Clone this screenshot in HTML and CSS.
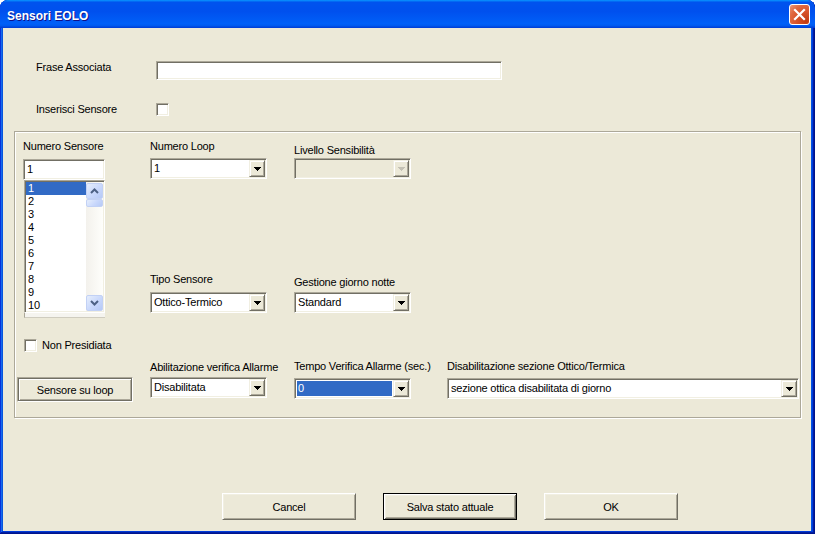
FILE: index.html
```html
<!DOCTYPE html>
<html lang="it">
<head>
<meta charset="utf-8">
<title>Sensori EOLO</title>
<link rel="stylesheet" href="styles.css">
</head>
<body>
<div class="window">
  <div class="titlebar">
    <span class="title">Sensori EOLO</span>
    <div class="close">
      <svg width="19" height="19" viewBox="0 0 19 19"><path d="M5 5 L14 14 M14 5 L5 14" stroke="#fff" stroke-width="2.2" stroke-linecap="square"/></svg>
    </div>
  </div>
  <div class="client">
    <div class="row row-frase">
      <span class="lbl wide">Frase Associata</span>
      <div class="sunken frase"></div>
    </div>
    <div class="row row-ins">
      <span class="lbl wide">Inserisci Sensore</span>
      <span class="sunken check"></span>
    </div>

    <div class="group">
      <div class="top">
        <div class="c1">
          <div class="lbl">Numero Sensore</div>
          <div class="sunken tf">1</div>
          <div class="sunken listbox">
            <div class="items">
              <div class="item sel">1</div>
              <div class="item">2</div>
              <div class="item">3</div>
              <div class="item">4</div>
              <div class="item">5</div>
              <div class="item">6</div>
              <div class="item">7</div>
              <div class="item">8</div>
              <div class="item">9</div>
              <div class="item">10</div>
            </div>
            <div class="sb">
              <div class="sbb"><svg width="9" height="6" viewBox="0 0 9 6"><path d="M1 5 L4.5 1.5 L8 5" fill="none" stroke="#4d6185" stroke-width="2"/></svg></div>
              <div class="sbb thumb"></div>
              <div class="sbb down"><svg width="9" height="6" viewBox="0 0 9 6"><path d="M1 1 L4.5 4.5 L8 1" fill="none" stroke="#4d6185" stroke-width="2"/></svg></div>
            </div>
          </div>
          <div class="strip"></div>
        </div>
        <div class="c2">
          <div class="lbl">Numero Loop</div>
          <div class="sunken combo m5"><span class="val">1</span><span class="raised ddb"><svg class="tri" width="7" height="4" viewBox="0 0 7 4" shape-rendering="crispEdges"><path d="M0 0h7v1h-7z M1 1h5v1h-5z M2 2h3v1h-3z M3 3h1v1h-1z" fill="#000"/></svg></span></div>
          <div class="lbl m94">Tipo Sensore</div>
          <div class="sunken combo m6"><span class="val">Ottico-Termico</span><span class="raised ddb"><svg class="tri" width="7" height="4" viewBox="0 0 7 4" shape-rendering="crispEdges"><path d="M0 0h7v1h-7z M1 1h5v1h-5z M2 2h3v1h-3z M3 3h1v1h-1z" fill="#000"/></svg></span></div>
        </div>
        <div class="c3">
          <div class="lbl m4">Livello Sensibilità</div>
          <div class="sunken combo disabled m1"><span class="val"></span><span class="raised ddb"><svg class="tri" width="7" height="4" viewBox="0 0 7 4" shape-rendering="crispEdges"><path d="M0 0h7v1h-7z M1 1h5v1h-5z M2 2h3v1h-3z M3 3h1v1h-1z" fill="#c4c1b4"/></svg></span></div>
          <div class="lbl m97">Gestione giorno notte</div>
          <div class="sunken combo m3"><span class="val">Standard</span><span class="raised ddb"><svg class="tri" width="7" height="4" viewBox="0 0 7 4" shape-rendering="crispEdges"><path d="M0 0h7v1h-7z M1 1h5v1h-5z M2 2h3v1h-3z M3 3h1v1h-1z" fill="#000"/></svg></span></div>
        </div>
      </div>

      <div class="row np-row">
        <span class="sunken check"></span>
        <span class="lbl np-lbl">Non Presidiata</span>
      </div>

      <div class="row bottom">
        <div class="b1">
          <div class="loopframe"><div class="loopbtn">Sensore su loop</div></div>
        </div>
        <div class="c2">
          <div class="lbl m1">Abilitazione verifica Allarme</div>
          <div class="sunken combo m3"><span class="val">Disabilitata</span><span class="raised ddb"><svg class="tri" width="7" height="4" viewBox="0 0 7 4" shape-rendering="crispEdges"><path d="M0 0h7v1h-7z M1 1h5v1h-5z M2 2h3v1h-3z M3 3h1v1h-1z" fill="#000"/></svg></span></div>
        </div>
        <div class="c3">
          <div class="lbl">Tempo Verifica Allarme (sec.)</div>
          <div class="sunken combo m5"><span class="val sel">0</span><span class="raised ddb"><svg class="tri" width="7" height="4" viewBox="0 0 7 4" shape-rendering="crispEdges"><path d="M0 0h7v1h-7z M1 1h5v1h-5z M2 2h3v1h-3z M3 3h1v1h-1z" fill="#000"/></svg></span></div>
        </div>
        <div class="c4">
          <div class="lbl">Disabilitazione sezione Ottico/Termica</div>
          <div class="sunken combo wide-combo m5"><span class="val">sezione ottica disabilitata di giorno</span><span class="raised ddb"><svg class="tri" width="7" height="4" viewBox="0 0 7 4" shape-rendering="crispEdges"><path d="M0 0h7v1h-7z M1 1h5v1h-5z M2 2h3v1h-3z M3 3h1v1h-1z" fill="#000"/></svg></span></div>
        </div>
      </div>
    </div>

    <div class="buttons">
      <div class="btn raised2">Cancel</div>
      <div class="btn default">Salva stato attuale</div>
      <div class="btn raised2">OK</div>
    </div>
  </div>
</div>
</body>
</html>
```

FILE: styles.css
```css
* { box-sizing: border-box; }
html, body { margin: 0; padding: 0; }
body {
  width: 815px;
  height: 534px;
  overflow: hidden;
  background: #ffffff;
  font-family: "Liberation Sans", Arial, sans-serif;
  font-size: 11px;
  color: #000;
}

.window {
  width: 815px;
  height: 534px;
  display: flex;
  flex-direction: column;
  background: #0054e3;
  border-radius: 8px 8px 0 0;
  overflow: hidden;
  box-shadow: inset -1px -1px #00138c, inset 1px 1px #0831d9,
              inset -2px -2px #001ea0, inset 2px 2px #166aee,
              inset -3px -3px #003bda, inset 3px 3px #0855dd;
}

.titlebar {
  flex: none;
  height: 28px;
  display: flex;
  align-items: flex-start;
  padding: 0 5px 0 7px;
  border-radius: 7px 7px 0 0;
  background: linear-gradient(180deg, #0997ff 0, #0053ee 8%, #0050ee 40%, #0060f8 85%, #0058ee 93%, #0047dd 96%, #003dd7 100%);
}
.title {
  margin-top: 9px;
  color: #fff;
  font-weight: bold;
  font-size: 12px;
  line-height: 14px;
  text-shadow: 1px 1px #0f1089;
}
.close {
  margin-left: auto;
  margin-top: 4px;
  width: 21px;
  height: 21px;
  border: 1px solid #fff;
  border-radius: 3px;
  background: radial-gradient(circle at 85% 85%, #c13b12 0, #d9552c 45%, #e0683f 70%, #ec9a7c 100%);
  display: flex;
  align-items: center;
  justify-content: center;
}

.client {
  flex: 1;
  margin: 0 4px 3px 3px;
  background: #ece9d8;
  padding-top: 33px;
}

.lbl {
  line-height: 13px;
  white-space: nowrap;
  letter-spacing: -0.2px;
}
.row { display: flex; align-items: flex-start; }
.row-frase { margin-left: 33px; }
.row-ins { margin-left: 33px; margin-top: 23px; }
.wide { width: 120px; }

.sunken {
  background: #fff;
  border: 1px solid;
  border-color: #aca899 #fff #fff #aca899;
  box-shadow: inset 1px 1px #716f64, inset -1px -1px #f1efe2;
}
.raised {
  background: #ece9d8;
  border: 1px solid;
  border-color: #f1efe2 #716f64 #716f64 #f1efe2;
  box-shadow: inset 1px 1px #fff, inset -1px -1px #aca899;
}

.frase { width: 346px; height: 19px; }
.check { width: 13px; height: 13px; flex: none; display: block; }

.group {
  margin: 15px 0 0 11px;
  width: 787px;
  height: 287px;
  border: 1px solid #aca899;
  box-shadow: inset 1px 1px #fff, 1px 1px #fff;
  padding: 8px 0 0 2px;
}
.top { display: flex; align-items: flex-start; }
.c1 { width: 133px; padding-left: 6px; }
.b1 { width: 133px; }
.c2 { width: 144px; }
.c3 { width: 153px; }
.c4 { width: 352px; }

.m1 { margin-top: 1px; }
.m3 { margin-top: 3px; }
.m4 { margin-top: 4px; }
.m5 { margin-top: 5px; }
.m6 { margin-top: 6px; }
.m94 { margin-top: 94px; }
.m97 { margin-top: 97px; }

.tf {
  width: 82px;
  height: 21px;
  margin-top: 6px;
  padding: 1px 0 1px 3px;
  line-height: 17px;
}
.listbox {
  margin-left: 1px;
  width: 81px;
  height: 133px;
  display: flex;
  padding: 1px;
}
.items { flex: 1; overflow: hidden; }
.item { height: 13px; line-height: 13px; padding-left: 2px; }
.item.sel { background: #316ac5; color: #fff; }
.sb {
  width: 17px;
  display: flex;
  flex-direction: column;
  background: linear-gradient(90deg, #f3f1ec, #fefefb);
}
.sbb {
  height: 16px;
  margin-top: 1px;
  border: 1px solid #c2d1f5;
  border-radius: 2px;
  background: linear-gradient(135deg, #e6eefc 0%, #c9d8fc 55%, #b6c9f6 100%);
  display: flex;
  align-items: center;
  justify-content: center;
}
.sbb.thumb { height: 8px; margin-top: 0; }
.sbb.down { margin-top: auto; margin-bottom: 0; }
.strip {
  margin-left: 1px;
  width: 81px;
  height: 5px;
  background: #f5f4ef;
  border-left: 1px solid #aca899;
  border-bottom: 1px solid #cfccbf;
}

.combo {
  width: 117px;
  height: 21px;
  padding: 1px;
  display: flex;
}
.combo.disabled { background: #ece9d8; }
.wide-combo { width: 352px; }
.val {
  flex: 1;
  line-height: 17px;
  padding-left: 2px;
  white-space: nowrap;
  overflow: hidden;
  letter-spacing: -0.2px;
}
.val.sel {
  background: #316ac5;
  color: #fff;
  margin: 1px 1px 1px 1px;
  line-height: 15px;
  padding-left: 1px;
}
.ddb {
  flex: none;
  width: 16px;
  height: 17px;
  display: flex;
  align-items: center;
  justify-content: center;
}
.tri { display: block; margin-top: 1px; }

.np-row { margin-top: 21px; margin-left: 7px; }
.np-lbl { margin-left: 5px; }

.bottom { margin-top: 8px; }
.loopframe {
  margin-top: 17px;
  width: 116px;
  height: 25px;
  border: 1px solid;
  border-color: #aca899 #fff #fff #aca899;
}
.loopbtn {
  height: 100%;
  display: flex;
  align-items: center;
  justify-content: center;
  background: #ece9d8;
  border: 1px solid;
  border-color: #716f64 #716f64 #716f64 #716f64;
  box-shadow: inset 1px 1px #fff, inset -1px -1px #aca899;
  letter-spacing: -0.2px;
}

.buttons {
  display: flex;
  gap: 27px;
  margin-top: 75px;
  padding-left: 219px;
}
.btn {
  width: 134px;
  height: 27px;
  display: flex;
  align-items: center;
  justify-content: center;
  letter-spacing: -0.2px;
}
.raised2 {
  background: #ece9d8;
  border: 1px solid;
  border-color: #fff #716f64 #716f64 #fff;
  box-shadow: inset 1px 1px #f1efe2, inset -1px -1px #aca899;
}
.default {
  background: #ece9d8;
  border: 1px solid #000;
  box-shadow: inset 1px 1px #fff, inset -1px -1px #716f64,
              inset 2px 2px #f1efe2, inset -2px -2px #aca899;
}
```
